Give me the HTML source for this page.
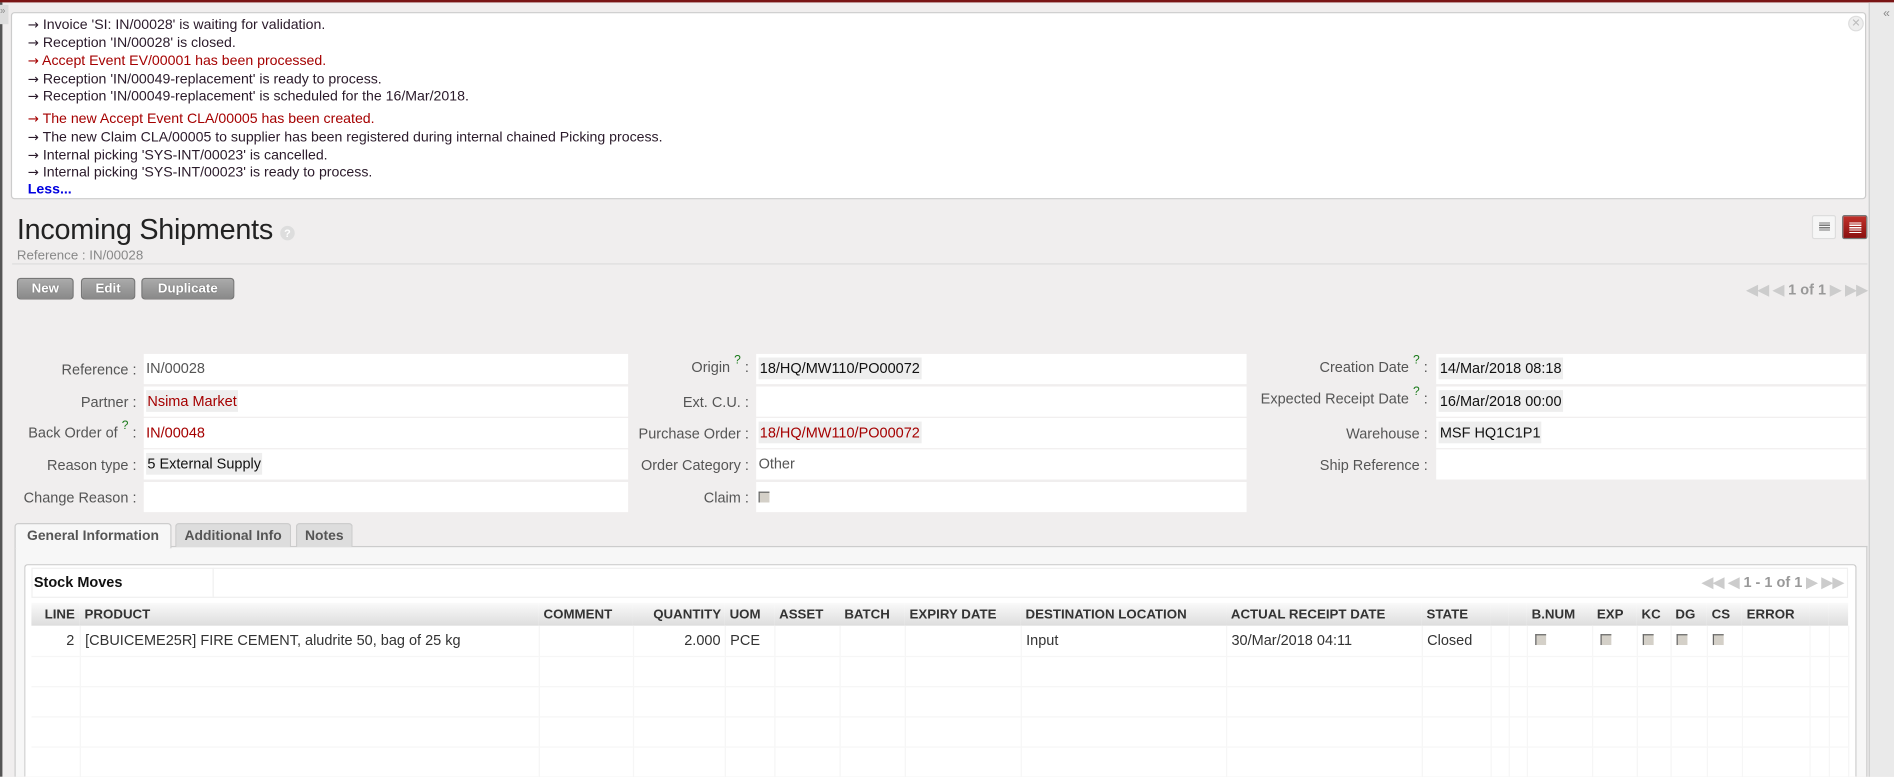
<!DOCTYPE html>
<html><head><meta charset="utf-8"><style>
*{box-sizing:border-box;margin:0;padding:0}
html,body{width:1894px;height:776px;overflow:hidden;background:#f0eeee}
#w{position:absolute;left:0;top:0;width:1568px;height:643px;transform:scale(1.20791);transform-origin:0 0;font-family:"Liberation Sans",Arial,sans-serif;color:#333;background:#f0eeee}
.a{position:absolute}
.msg{left:9px;top:10px;width:1536px;height:155px;background:#fff;border:1px solid #ccc;border-radius:3px}
.msg div{position:absolute;left:13px;font-size:11.7px;line-height:14px;color:#2a1a2a;white-space:nowrap}
.msg div b{font-family:"DejaVu Sans",sans-serif;font-weight:normal;font-size:11px}
.msg .r{color:#a50000}
.lbl{font-size:12px;color:#555;text-align:right;white-space:nowrap}
.fld{background:#fff;height:25px;font-size:12px;line-height:25px;padding-left:2px;white-space:nowrap}
.fld span{background:#eee;padding:2px 1px}
.q{color:#1a7a1a;font-size:10px;vertical-align:top;position:relative;top:-4px}
.btn{top:230px;height:18px;border:1px solid #777;border-radius:3px;background:linear-gradient(#aaa,#8a8a8a);color:#fff;font-weight:bold;font-size:11px;text-align:center;line-height:16px;text-shadow:0 0 1px #555}
.tab{top:433px;height:20px;font-size:12px;font-weight:bold;color:#555;background:#ddd;border:1px solid #ccc;border-bottom:none;border-radius:3px 3px 0 0;text-align:center;line-height:21px;white-space:nowrap}
table{border-collapse:collapse;table-layout:fixed;font-size:12px}
th{height:19px;background:linear-gradient(#fafafa,#ddd);font-size:11px;font-weight:bold;color:#333;text-align:left;padding-left:4px;white-space:nowrap}
td{height:25px;border-right:1px solid #f6f6f6;border-bottom:1px solid #f6f6f6;padding-left:4px;white-space:nowrap;color:#333}
.cb{display:inline-block;width:9px;height:9px;background:#d4d0c8;border-top:1px solid #666;border-left:1px solid #666}
.pg{color:#999;font-size:12px;font-weight:bold;white-space:nowrap}
.pg i{font-style:normal;color:#ccc}
</style></head><body><div id="w">
<div class="a" style="left:0;top:0;width:1568px;height:2px;background:#7a1515"></div>
<div class="a" style="left:0;top:2px;width:2px;height:641px;background:#555"></div>
<div class="a" style="left:0;top:4px;width:7px;height:16px;background:#ddd;font-size:8px;color:#888">»</div>
<div class="a" style="left:1547px;top:2px;width:21px;height:641px;background:#eaeaea;border-left:1px solid #ccc"></div>
<div class="a" style="left:1559px;top:6px;font-size:10px;color:#888">«</div>

<div class="a msg">
<div style="top:3px"><b>→</b> Invoice 'SI: IN/00028' is waiting for validation.</div>
<div style="top:18px"><b>→</b> Reception 'IN/00028' is closed.</div>
<div class="r" style="top:33px"><b>→</b> Accept Event EV/00001 has been processed.</div>
<div style="top:48px"><b>→</b> Reception 'IN/00049-replacement' is ready to process.</div>
<div style="top:62px"><b>→</b> Reception 'IN/00049-replacement' is scheduled for the 16/Mar/2018.</div>
<div class="r" style="top:81px"><b>→</b> The new Accept Event CLA/00005 has been created.</div>
<div style="top:96px"><b>→</b> The new Claim CLA/00005 to supplier has been registered during internal chained Picking process.</div>
<div style="top:111px"><b>→</b> Internal picking 'SYS-INT/00023' is cancelled.</div>
<div style="top:125px"><b>→</b> Internal picking 'SYS-INT/00023' is ready to process.</div>
<div style="top:139px;color:#0000e0;font-weight:bold">Less...</div>
<span class="a" style="left:1520px;top:2px;width:13px;height:13px;border-radius:50%;background:#eee;border:1px solid #ddd;font-size:9px;color:#bbb;text-align:center;line-height:11px">✕</span>
</div>

<div class="a" style="left:14px;top:177px;font-size:23.8px;color:#222;letter-spacing:-0.2px">Incoming Shipments</div>
<div class="a" style="left:232px;top:187px;width:12px;height:12px;border-radius:50%;background:#ddd;color:#fff;font-size:9px;text-align:center;line-height:12px;font-weight:bold">?</div>
<div class="a" style="left:14px;top:206px;font-size:11px;color:#888">Reference : IN/00028</div>
<div class="a" style="left:10px;top:218px;width:1536px;height:1px;background:#ddd"></div>
<div class="a" style="left:1500px;top:178px;width:20px;height:20px;background:#f6f6f6;border:1px solid #ddd;border-radius:2px"><div style="margin:5px 0 0 5px;width:9px;height:8px;background:repeating-linear-gradient(#777 0 1px,transparent 1px 2px)"></div></div>
<div class="a" style="left:1525px;top:178px;width:21px;height:20px;background:linear-gradient(#c0302a,#8a1010);border:1px solid #777;border-radius:2px"><div style="margin:5px 0 0 5px;width:10px;height:9px;background:repeating-linear-gradient(#fff 0 1px,transparent 1px 2px)"></div></div>

<div class="a btn" style="left:14px;width:47px">New</div>
<div class="a btn" style="left:67px;width:45px">Edit</div>
<div class="a btn" style="left:117px;width:77px">Duplicate</div>
<div class="a pg" style="left:1446px;top:233px"><i>◀◀ ◀</i> 1 of 1 <i>▶ ▶▶</i></div>

<div class="a lbl" style="left:0;width:113px;top:299px">Reference :</div>
<div class="a lbl" style="left:0;width:113px;top:326px">Partner :</div>
<div class="a lbl" style="left:0;width:113px;top:351px">Back Order of <span class="q">?</span> :</div>
<div class="a lbl" style="left:0;width:113px;top:378px">Reason type :</div>
<div class="a lbl" style="left:0;width:113px;top:405px">Change Reason :</div>
<div class="a fld" style="left:119px;width:401px;top:293px;color:#555">IN/00028</div>
<div class="a fld" style="left:119px;width:401px;top:320px;color:#a50000"><span>Nsima Market</span></div>
<div class="a fld" style="left:119px;width:401px;top:346px;color:#a50000">IN/00048</div>
<div class="a fld" style="left:119px;width:401px;top:372px;color:#111"><span>5 External Supply</span></div>
<div class="a fld" style="left:119px;width:401px;top:399px"></div>

<div class="a lbl" style="left:400px;width:220px;top:297px">Origin <span class="q">?</span> :</div>
<div class="a lbl" style="left:400px;width:220px;top:326px">Ext. C.U. :</div>
<div class="a lbl" style="left:400px;width:220px;top:352px">Purchase Order :</div>
<div class="a lbl" style="left:400px;width:220px;top:378px">Order Category :</div>
<div class="a lbl" style="left:400px;width:220px;top:405px">Claim :</div>
<div class="a fld" style="left:626px;width:406px;top:293px;color:#111"><span>18/HQ/MW110/PO00072</span></div>
<div class="a fld" style="left:626px;width:406px;top:320px"></div>
<div class="a fld" style="left:626px;width:406px;top:346px;color:#a50000"><span>18/HQ/MW110/PO00072</span></div>
<div class="a fld" style="left:626px;width:406px;top:372px;color:#555">Other</div>
<div class="a fld" style="left:626px;width:406px;top:399px"><i class="cb" style="margin-top:8px;vertical-align:top"></i></div>

<div class="a lbl" style="left:960px;width:222px;top:297px">Creation Date <span class="q">?</span> :</div>
<div class="a lbl" style="left:960px;width:222px;top:323px">Expected Receipt Date <span class="q">?</span> :</div>
<div class="a lbl" style="left:960px;width:222px;top:352px">Warehouse :</div>
<div class="a lbl" style="left:960px;width:222px;top:378px">Ship Reference :</div>
<div class="a fld" style="left:1189px;width:356px;top:293px;color:#111"><span>14/Mar/2018 08:18</span></div>
<div class="a fld" style="left:1189px;width:356px;top:320px;color:#111"><span>16/Mar/2018 00:00</span></div>
<div class="a fld" style="left:1189px;width:356px;top:346px;color:#111"><span>MSF HQ1C1P1</span></div>
<div class="a fld" style="left:1189px;width:356px;top:372px"></div>

<div class="a" style="left:12px;top:452px;width:1534px;height:191px;background:#f7f7f7;border:1px solid #ccc;border-bottom:none"></div>
<div class="a tab" style="left:12px;width:130px;background:#f7f7f7;height:21px;z-index:2;font-size:11.5px">General Information</div>
<div class="a tab" style="left:145px;width:96px;font-size:11.5px">Additional Info</div>
<div class="a tab" style="left:245px;width:47px;font-size:11.5px">Notes</div>

<div class="a" style="left:20px;top:467px;width:1517px;height:176px;background:#fff;border:1px solid #ccc;border-bottom:none;border-radius:3px 3px 0 0"></div>
<div class="a" style="left:26px;top:470px;width:1504px;height:25px;border:1px solid #f0f0f0"></div>
<div class="a" style="left:176px;top:470px;width:1px;height:25px;background:#f0f0f0"></div>
<div class="a" style="left:28px;top:475px;font-size:12px;font-weight:bold;color:#111">Stock Moves</div>
<div class="a pg" style="left:1409px;top:475px"><i>◀◀ ◀</i> 1 - 1 of 1 <i>▶ ▶▶</i></div>

<table class="a" style="left:26px;top:499px;width:1504px">
<colgroup><col style="width:40px"><col style="width:380px"><col style="width:78px"><col style="width:76px"><col style="width:41px"><col style="width:54px"><col style="width:54px"><col style="width:96px"><col style="width:170px"><col style="width:162px"><col style="width:57px"><col style="width:15px"><col style="width:15px"><col style="width:54px"><col style="width:37px"><col style="width:28px"><col style="width:30px"><col style="width:29px"><col style="width:56px"><col style="width:16px"><col style="width:16px"></colgroup>
<tr><th style="text-align:right;padding-right:4px">LINE</th><th>PRODUCT</th><th>COMMENT</th><th style="text-align:right;padding-right:3px">QUANTITY</th><th>UOM</th><th>ASSET</th><th>BATCH</th><th>EXPIRY DATE</th><th>DESTINATION LOCATION</th><th>ACTUAL RECEIPT DATE</th><th>STATE</th><th></th><th></th><th>B.NUM</th><th>EXP</th><th>KC</th><th>DG</th><th>CS</th><th>ERROR</th><th></th><th></th></tr>
<tr><td style="text-align:right;padding-right:4px">2</td><td>[CBUICEME25R] FIRE CEMENT, aludrite 50, bag of 25 kg</td><td></td><td style="text-align:right;padding-right:3px">2.000</td><td>PCE</td><td></td><td></td><td></td><td>Input</td><td>30/Mar/2018 04:11</td><td>Closed</td><td></td><td></td><td style="padding-left:6px"><i class="cb"></i></td><td style="padding-left:6px"><i class="cb"></i></td><td><i class="cb"></i></td><td><i class="cb"></i></td><td><i class="cb"></i></td><td></td><td></td><td></td></tr>
<tr><td></td><td></td><td></td><td></td><td></td><td></td><td></td><td></td><td></td><td></td><td></td><td></td><td></td><td></td><td></td><td></td><td></td><td></td><td></td><td></td><td></td></tr>
<tr><td></td><td></td><td></td><td></td><td></td><td></td><td></td><td></td><td></td><td></td><td></td><td></td><td></td><td></td><td></td><td></td><td></td><td></td><td></td><td></td><td></td></tr>
<tr><td></td><td></td><td></td><td></td><td></td><td></td><td></td><td></td><td></td><td></td><td></td><td></td><td></td><td></td><td></td><td></td><td></td><td></td><td></td><td></td><td></td></tr>
<tr><td></td><td></td><td></td><td></td><td></td><td></td><td></td><td></td><td></td><td></td><td></td><td></td><td></td><td></td><td></td><td></td><td></td><td></td><td></td><td></td><td></td></tr>
</table>
</div></body></html>
